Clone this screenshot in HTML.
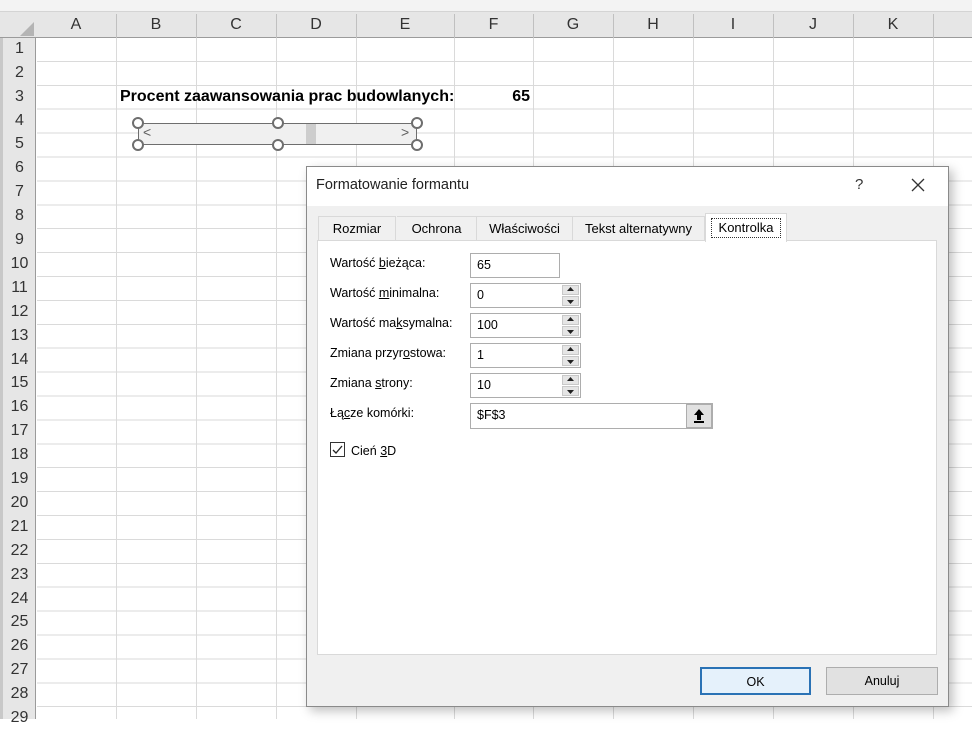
<!DOCTYPE html>
<html><head><meta charset="utf-8">
<style>
*{margin:0;padding:0;box-sizing:border-box}
body{width:972px;height:719px;overflow:hidden;background:#fff;font-family:"Liberation Sans",sans-serif;position:relative}
.abs{position:absolute}
#top{left:0;top:0;width:972px;height:12px;background:#f3f3f3;border-bottom:1px solid #d4d4d4}
#hdr{left:0;top:12px;width:972px;height:26px;background:#e6e6e6;border-bottom:1px solid #9b9b9b}
#rh{left:0;top:38px;width:36px;height:681px;background:#e6e6e6;border-right:1px solid #9b9b9b;border-left:3px solid #c8c8c8}
#cells{left:37px;top:38px;width:935px;height:681px;background:repeating-linear-gradient(to bottom,transparent 0,transparent 22.9px,#dadada 22.9px,#dadada 23.9px)}
.v{position:absolute;top:38px;width:1px;height:681px;background:#dadada}
.hv{position:absolute;top:14px;width:1px;height:24px;background:#c0c0c0}
.ch{position:absolute;top:12px;height:26px;line-height:26px;text-align:center;font-size:16px;color:#333}
.rn{position:absolute;left:3px;width:33px;text-align:center;font-size:16px;color:#333;height:24px;line-height:24px}
.lab{font-size:12.5px;color:#000}
.inp{position:absolute;background:#fff;border:1px solid #adadad;font-size:12.5px;padding-left:6px;line-height:23px}
.spin{position:absolute;width:19px;height:23px;right:0;top:0;background:#fff}
.spin div{position:absolute;left:1px;width:17px;height:10px;background:#e5e5e5;border:1px solid #c8c8c8}
.btn{position:absolute;height:28px;background:#e1e1e1;border:1px solid #adadad;font-size:12.5px;text-align:center;line-height:26px}
.tab{position:absolute;top:216px;height:24px;line-height:24px;font-size:13px;text-align:center;border-right:1px solid #d9d9d9;background:#f0f0f0}
.circ{position:absolute;width:12px;height:12px;border:2px solid #6e6e6e;border-radius:50%;background:#fff}
</style></head><body>
<div id="top" class="abs"></div>
<div id="hdr" class="abs"></div>
<div id="cells" class="abs"></div>
<div id="rh" class="abs"></div>
<svg class="abs" style="left:20px;top:22px" width="14" height="14"><polygon points="14,0 14,14 0,14" fill="#b4b4b4"/></svg>
<div class="v" style="left:116px"></div><div class="v" style="left:196px"></div><div class="v" style="left:276px"></div><div class="v" style="left:356px"></div><div class="v" style="left:454px"></div><div class="v" style="left:533px"></div><div class="v" style="left:613px"></div><div class="v" style="left:693px"></div><div class="v" style="left:773px"></div><div class="v" style="left:853px"></div><div class="v" style="left:933px"></div>
<div class="hv" style="left:116px"></div><div class="hv" style="left:196px"></div><div class="hv" style="left:276px"></div><div class="hv" style="left:356px"></div><div class="hv" style="left:454px"></div><div class="hv" style="left:533px"></div><div class="hv" style="left:613px"></div><div class="hv" style="left:693px"></div><div class="hv" style="left:773px"></div><div class="hv" style="left:853px"></div><div class="hv" style="left:933px"></div>
<div class="ch" style="left:36px;width:80px">A</div><div class="ch" style="left:116px;width:80px">B</div><div class="ch" style="left:196px;width:80px">C</div><div class="ch" style="left:276px;width:80px">D</div><div class="ch" style="left:356px;width:98px">E</div><div class="ch" style="left:454px;width:79px">F</div><div class="ch" style="left:533px;width:80px">G</div><div class="ch" style="left:613px;width:80px">H</div><div class="ch" style="left:693px;width:80px">I</div><div class="ch" style="left:773px;width:80px">J</div><div class="ch" style="left:853px;width:80px">K</div>
<div class="rn" style="top:37px">1</div><div class="rn" style="top:61px">2</div><div class="rn" style="top:85px">3</div><div class="rn" style="top:109px">4</div><div class="rn" style="top:132px">5</div><div class="rn" style="top:156px">6</div><div class="rn" style="top:180px">7</div><div class="rn" style="top:204px">8</div><div class="rn" style="top:228px">9</div><div class="rn" style="top:252px">10</div><div class="rn" style="top:276px">11</div><div class="rn" style="top:300px">12</div><div class="rn" style="top:324px">13</div><div class="rn" style="top:348px">14</div><div class="rn" style="top:371px">15</div><div class="rn" style="top:395px">16</div><div class="rn" style="top:419px">17</div><div class="rn" style="top:443px">18</div><div class="rn" style="top:467px">19</div><div class="rn" style="top:491px">20</div><div class="rn" style="top:515px">21</div><div class="rn" style="top:539px">22</div><div class="rn" style="top:563px">23</div><div class="rn" style="top:587px">24</div><div class="rn" style="top:610px">25</div><div class="rn" style="top:634px">26</div><div class="rn" style="top:658px">27</div><div class="rn" style="top:682px">28</div><div class="rn" style="top:706px">29</div>
<div class="abs" style="left:120px;top:88px;font-size:16px;font-weight:bold;white-space:nowrap">Procent zaawansowania prac budowlanych:</div>
<div class="abs" style="left:454px;top:88px;width:76px;text-align:right;font-size:16px;font-weight:bold">65</div>
<div class="abs" style="left:138px;top:123px;width:279px;height:22px;background:#f0f0f0;border:1px solid #6e6e6e"></div>
<div class="abs" style="left:306px;top:124px;width:10px;height:20px;background:#cdcdcd"></div>
<div class="abs" style="left:143px;top:124px;font-size:14px;color:#606060">&lt;</div>
<div class="abs" style="left:401px;top:124px;font-size:14px;color:#606060">&gt;</div>
<div class="circ" style="left:132px;top:117px"></div><div class="circ" style="left:272px;top:117px"></div><div class="circ" style="left:411px;top:117px"></div>
<div class="circ" style="left:132px;top:139px"></div><div class="circ" style="left:272px;top:139px"></div><div class="circ" style="left:411px;top:139px"></div>
<div class="abs" style="left:306px;top:166px;width:643px;height:541px;background:#f0f0f0;border:1px solid #8a8a8a;box-shadow:4px 4px 10px rgba(0,0,0,0.25)"></div>
<div class="abs" style="left:307px;top:167px;width:641px;height:39px;background:#fff"></div>
<div class="abs" style="left:316px;top:177px;font-size:14.5px;color:#222">Formatowanie formantu</div>
<div class="abs" style="left:855px;top:176px;font-size:15px;color:#333">?</div>
<svg class="abs" style="left:911px;top:178px" width="14" height="14"><path d="M1 1L13 13M13 1L1 13" stroke="#333" stroke-width="1.3"/></svg>
<div class="abs" style="left:317px;top:240px;width:620px;height:415px;background:#fff;border:1px solid #d9d9d9"></div>
<div class="tab" style="left:318px;width:78px;border-left:1px solid #d9d9d9;border-top:1px solid #d9d9d9">Rozmiar</div>
<div class="tab" style="left:397px;width:80px;border-top:1px solid #d9d9d9">Ochrona</div>
<div class="tab" style="left:477px;width:96px;border-top:1px solid #d9d9d9">Właściwości</div>
<div class="tab" style="left:573px;width:132px;border-top:1px solid #d9d9d9">Tekst alternatywny</div>
<div class="abs" style="left:705px;top:213px;width:82px;height:29px;background:#fff;border:1px solid #d9d9d9;border-bottom:none"></div>
<div class="abs" style="left:711px;top:218px;width:70px;height:20px;border:1px dotted #333;font-size:13px;text-align:center;line-height:18px">Kontrolka</div>
<div class="abs lab" style="left:330px;top:256px">Wartość <u>b</u>ieżąca:</div>
<div class="abs lab" style="left:330px;top:286px">Wartość <u>m</u>inimalna:</div>
<div class="abs lab" style="left:330px;top:316px">Wartość ma<u>k</u>symalna:</div>
<div class="abs lab" style="left:330px;top:346px">Zmiana przyr<u>o</u>stowa:</div>
<div class="abs lab" style="left:330px;top:376px">Zmiana <u>s</u>trony:</div>
<div class="abs lab" style="left:330px;top:406px">Łą<u>c</u>ze komórki:</div>
<div class="inp" style="left:470px;top:253px;width:90px;height:25px">65</div>
<div class="inp" style="left:470px;top:283px;width:111px;height:25px">0<div class="spin"><div style="top:1px"></div><div style="top:12px"></div></div></div>
<div class="inp" style="left:470px;top:313px;width:111px;height:25px">100<div class="spin"><div style="top:1px"></div><div style="top:12px"></div></div></div>
<div class="inp" style="left:470px;top:343px;width:111px;height:25px">1<div class="spin"><div style="top:1px"></div><div style="top:12px"></div></div></div>
<div class="inp" style="left:470px;top:373px;width:111px;height:25px">10<div class="spin"><div style="top:1px"></div><div style="top:12px"></div></div></div>
<svg class="abs" style="left:561px;top:284px" width="19" height="114"><g fill="#222"><polygon points="6,7 13,7 9.5,3"/><polygon points="6,16 13,16 9.5,20"/><polygon points="6,37 13,37 9.5,33"/><polygon points="6,46 13,46 9.5,50"/><polygon points="6,67 13,67 9.5,63"/><polygon points="6,76 13,76 9.5,80"/><polygon points="6,97 13,97 9.5,93"/><polygon points="6,106 13,106 9.5,110"/></g></svg>
<div class="inp" style="left:470px;top:403px;width:243px;height:26px">$F$3</div>
<div class="abs" style="left:686px;top:404px;width:26px;height:24px;background:#e1e1e1;border:1px solid #adadad"></div>
<svg class="abs" style="left:692px;top:408px" width="14" height="16"><polygon points="7,1 12,7 9,7 9,12 5,12 5,7 2,7" fill="#000"/><rect x="2" y="13" width="10" height="2" fill="#000"/></svg>
<div class="abs" style="left:330px;top:442px;width:15px;height:15px;border:1px solid #333;background:#fff"></div>
<svg class="abs" style="left:331px;top:443px" width="13" height="13"><path d="M2 7L5 10L11 3" stroke="#222" stroke-width="1.3" fill="none"/></svg>
<div class="abs lab" style="left:351px;top:444px">Cień <u>3</u>D</div>
<div class="btn" style="left:700px;top:667px;width:111px;border:2px solid #2a72b5;background:#e5f1fb">OK</div>
<div class="btn" style="left:826px;top:667px;width:112px">Anuluj</div>
</body></html>
